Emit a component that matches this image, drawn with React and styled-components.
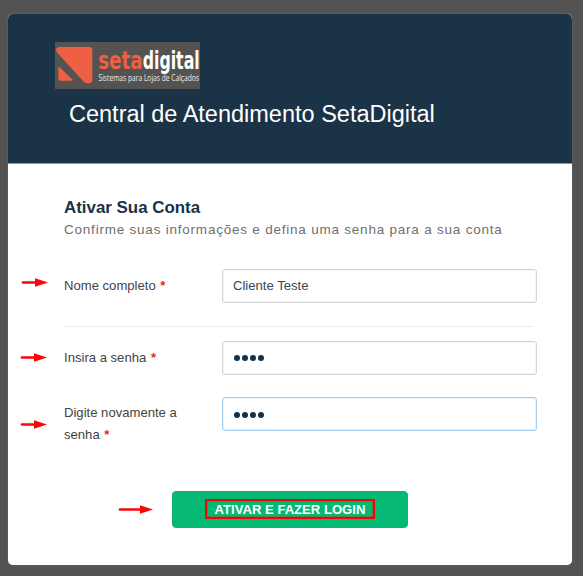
import React from "react";
import styled, { createGlobalStyle } from "styled-components";

const Global = createGlobalStyle`
  * { box-sizing: border-box; }
  html, body { margin: 0; background: #535353; overflow: hidden; }
  body { font-family: "Liberation Sans", Arial, sans-serif; }
`;

const Page = styled.div`
  height: 576px;
  padding: 13.5px 11px 10.5px 8px;
  background: #535353;
`;

const Card = styled.main`
  height: 551.5px;
  background: #fff;
  border-radius: 5px;
  overflow: hidden;
  box-shadow: 0 0 1px #aaa;
`;

const Header = styled.header`
  height: 150px;
  padding: 28.5px 47px 0;
  background: #1a3347;
  border-bottom: 1px solid #8b98a2;
`;

const LogoBox = styled.svg`
  display: block;
  width: 145px;
  height: 47px;
  background: #555351;
`;

const Title = styled.h1`
  margin: 11px 0 0 14px;
  font-size: 23.5px;
  line-height: 28px;
  font-weight: 400;
  color: #fff;
  white-space: nowrap;
`;

const Form = styled.form`
  display: flex;
  flex-direction: column;
  padding: 33px 35px 0 56px;
`;

const Heading = styled.h2`
  margin: 0;
  font-size: 16.9px;
  line-height: 22px;
  font-weight: 700;
  color: #183247;
`;

const Subtitle = styled.p`
  margin: 0 0 28px;
  font-size: 13.5px;
  line-height: 22px;
  letter-spacing: 0.78px;
  color: #6f6f6f;
  white-space: nowrap;
`;

const Row = styled.div`
  position: relative;
  display: grid;
  grid-template-columns: 158px 1fr;
  height: 35px;
  margin-bottom: ${(p) => p.$gap}px;
`;

const Label = styled.label`
  width: 135px;
  padding-top: ${(p) => p.$top}px;
  font-size: 13.1px;
  line-height: 22px;
  color: #444;
`;

const Required = styled.span`
  margin-left: 1px;
  font-weight: 700;
  color: #e8252b;
`;

const Input = styled.div`
  display: flex;
  align-items: center;
  height: 34px;
  padding: 0 10px;
  border: 1px solid ${(p) => (p.$focused ? "#a3d0f4" : "#d6d6d6")};
  border-radius: 3px;
  box-shadow: inset 0 0 0 1px ${(p) => (p.$focused ? "#e3f2fd" : "#f4f4f4")};
  font-size: 13.1px;
  color: #34495b;
`;

const Dots = styled.div`
  display: flex;
  gap: 2px;
  padding: 1px 0 0 1px;
`;

const Dot = styled.span`
  width: 6px;
  height: 6px;
  border-radius: 50%;
  background: #14304a;
`;

const Divider = styled.hr`
  width: 470px;
  height: 1px;
  margin: 0 0 14px;
  border: 0;
  background: #ececec;
`;

const Actions = styled.div`
  position: relative;
  margin-left: 108px;
  width: 236px;
`;

const Submit = styled.button`
  display: flex;
  align-items: center;
  justify-content: center;
  width: 236px;
  height: 37px;
  padding: 0;
  border: 1px solid #12b072;
  border-radius: 4px;
  background: #05b975;
`;

const Highlight = styled.span`
  display: flex;
  align-items: center;
  justify-content: center;
  width: 170px;
  height: 20px;
  border: 2px solid #f20505;
  box-shadow: inset 0 0 0 0.5px #c43a20;
  font: 700 13.1px "Liberation Sans", Arial, sans-serif;
  color: #fff;
  white-space: nowrap;
`;

const ArrowIcon = styled.svg`
  position: absolute;
  left: ${(p) => p.$x}px;
  top: ${(p) => p.$y}px;
  overflow: visible;
`;

function Arrow({ x, y, length = 26 }) {
  return (
    <ArrowIcon $x={x} $y={y} width={length} height="9" aria-hidden="true">
      <path d={`M1 4.5H${length - 10}`} stroke="#fb0505" strokeWidth="2.7" strokeLinecap="round" />
      <path d={`M${length - 13} .2L${length} 4.5L${length - 13} 8.8Z`} fill="#fb0505" />
    </ArrowIcon>
  );
}

function Logo() {
  return (
    <LogoBox viewBox="0 0 145 47" role="img" aria-label="setadigital">
      <path d="M3.5 5H34.5Q37.3 5 37.3 8V38.5Q37 41.3 34 41.3H32Q30 41.3 28 39L1.6 10Q-.3 6 3.5 5Z" fill="#ed6044" />
      <path d="M3.4 26.5Q3.4 24 5.2 25.7L17 37Q18.5 38.8 16.5 38.8H5.4Q3.4 38.8 3.4 37Z" fill="#ed6044" />
      <g fontFamily="'DejaVu Sans Condensed', 'DejaVu Sans', sans-serif">
        <text x="43.2" y="27" fontSize="25" fontWeight="700" fill="#ed6044" textLength="44.5" lengthAdjust="spacingAndGlyphs">seta</text>
        <text x="87.7" y="27" fontSize="25" fontWeight="700" fill="#fff" textLength="57" lengthAdjust="spacingAndGlyphs">digital</text>
      </g>
      <text x="43.5" y="38.7" fontFamily="'Open Sans', sans-serif" fontSize="8.4" fill="#eee" textLength="100.5" lengthAdjust="spacingAndGlyphs">Sistemas para Lojas de Calçados</text>
    </LogoBox>
  );
}

function Password({ focused }) {
  return (
    <Input $focused={focused}>
      <Dots><Dot /><Dot /><Dot /><Dot /></Dots>
    </Input>
  );
}

export default function App() {
  return (
    <Page>
      <Global />
      <Card>
        <Header>
          <Logo />
          <Title>Central de Atendimento SetaDigital</Title>
        </Header>
        <Form>
          <Heading>Ativar Sua Conta</Heading>
          <Subtitle>Confirme suas informações e defina uma senha para a sua conta</Subtitle>
          <Row $gap={22}>
            <Arrow x={-42} y={9} />
            <Label $top={6}>Nome completo <Required>*</Required></Label>
            <Input>Cliente Teste</Input>
          </Row>
          <Divider />
          <Row $gap={21.5}>
            <Arrow x={-43} y={12.5} />
            <Label $top={6}>Insira a senha <Required>*</Required></Label>
            <Password />
          </Row>
          <Row $gap={58.5}>
            <Arrow x={-43} y={23} />
            <Label $top={4.5}>Digite novamente a senha <Required>*</Required></Label>
            <Password focused />
          </Row>
          <Actions>
            <Arrow x={-53.5} y={14} length={34} />
            <Submit type="button"><Highlight>ATIVAR E FAZER LOGIN</Highlight></Submit>
          </Actions>
        </Form>
      </Card>
    </Page>
  );
}
